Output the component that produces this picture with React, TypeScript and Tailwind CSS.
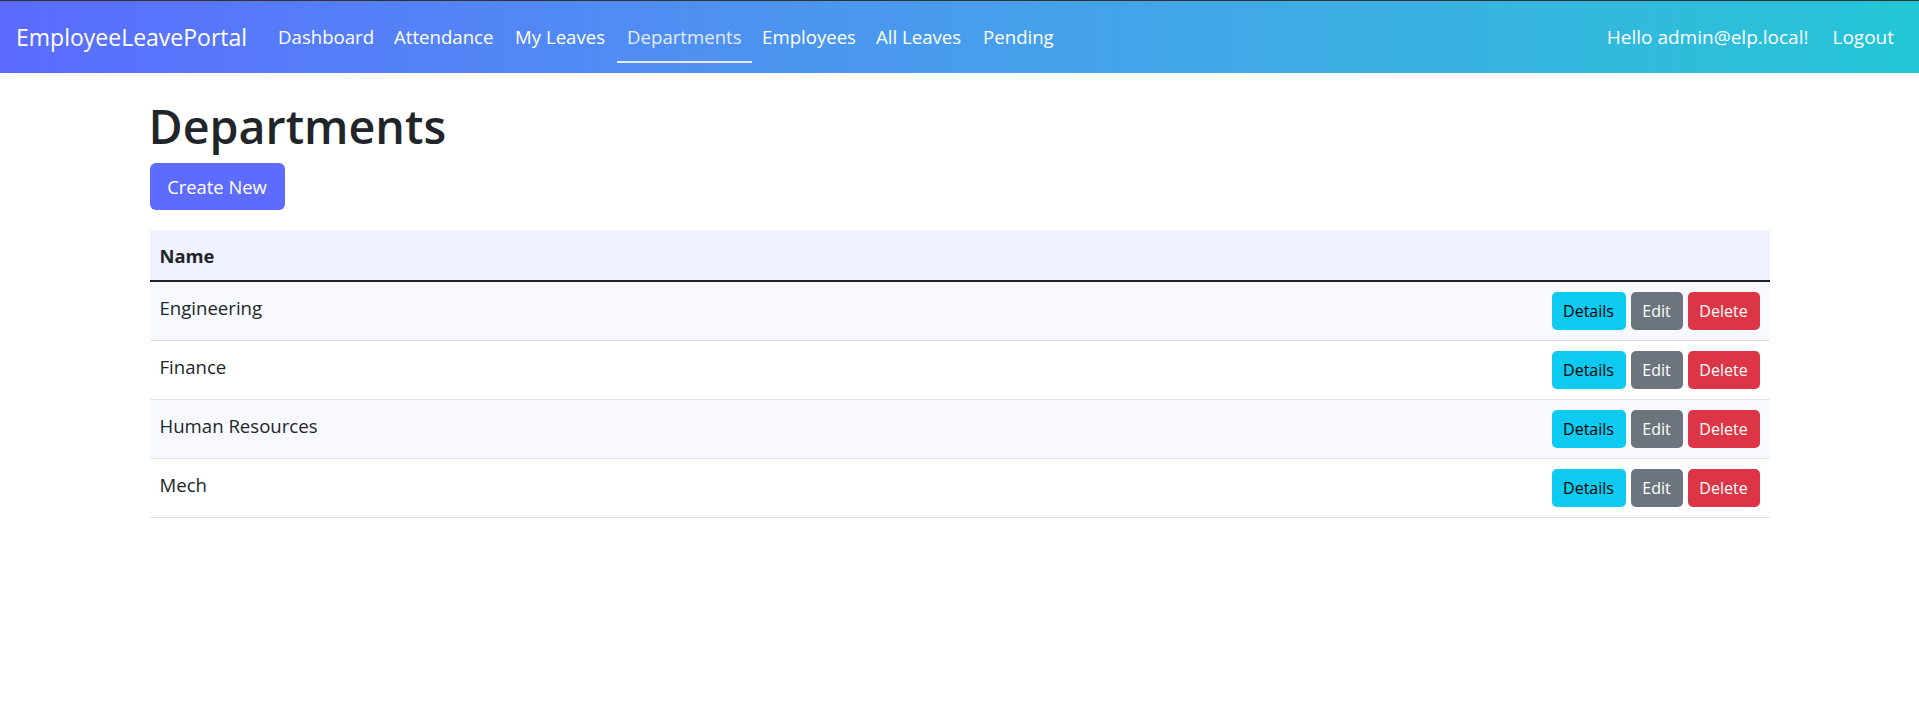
import React from "react";

const navLinks = [
  { label: "Dashboard", w: "w-[116px]" },
  { label: "Attendance", w: "w-[121px]" },
  { label: "My Leaves", w: "w-[112px]" },
  { label: "Departments", w: "w-[135px]", active: true },
  { label: "Employees", w: "w-[114px]" },
  { label: "All Leaves", w: "w-[107px]" },
  { label: "Pending", w: "w-[91px]" },
];

const departments = ["Engineering", "Finance", "Human Resources", "Mech"];

export default function App() {
  return (
    <div
      className="min-h-screen bg-white text-[#212529]"
      style={{ fontFamily: '"Open Sans", "Noto Sans", sans-serif' }}
    >
      <nav className="h-[73px] border-t border-[#333333] bg-linear-to-r from-[#5b6bff] to-[#22c6d6] flex items-stretch pl-[16px] pr-[15px]">
        <a className="flex items-center text-[23px] text-white mr-[21px] whitespace-nowrap">
          EmployeeLeavePortal
        </a>
        <ul className="flex items-stretch">
          {navLinks.map((l) => (
            <li
              key={l.label}
              className={`relative flex items-center px-[10px] text-[18.6px] whitespace-nowrap ${l.w} ${
                l.active ? "text-[#e3eaff]" : "text-white"
              }`}
            >
              {l.label}
              {l.active && (
                <span className="absolute left-0 right-0 top-[60px] h-[2px] bg-[#e6ecfa]" />
              )}
            </li>
          ))}
        </ul>
        <div className="ml-auto flex items-center">
          <span className="text-[19px] text-white whitespace-nowrap mr-[14px]">
            Hello admin@elp.local!
          </span>
          <span className="px-[10px] text-[19px] text-white">Logout</span>
        </div>
      </nav>

      <main className="mx-auto w-[1620px] pt-[23px]">
        <h1 className="text-[46.6px] font-semibold leading-[60px] mb-[7px] -ml-[1px]">
          Departments
        </h1>
        <button className="w-[135px] h-[47px] rounded-[6px] bg-[#5d6bff] text-white text-[18.4px] mb-[20px]">
          Create New
        </button>
        <table className="w-full border-separate border-spacing-0">
          <thead>
            <tr className="bg-[#f0f3ff]">
              <th className="text-left font-bold text-[18.4px] leading-[30px] px-[10px] pt-[11px] pb-[9px] border-b-2 border-[#212529]">
                Name
              </th>
              <th className="border-b-2 border-[#212529]"></th>
            </tr>
          </thead>
          <tbody>
            {departments.map((d, i) => (
              <tr key={d} className={i % 2 === 0 ? "bg-[#f8f9ff]" : "bg-white"}>
                <td className="align-top text-[18.6px] leading-[30px] px-[10px] pt-[11px] pb-[9px] border-b border-[#dee2e6]">
                  {d}
                </td>
                <td className="align-top px-[10px] py-[10px] border-b border-[#dee2e6]">
                  <div className="flex justify-end gap-[5px]">
                    <button className="w-[74px] h-[38px] rounded-[5px] bg-[#0dcaf0] text-black text-[16px]">
                      Details
                    </button>
                    <button className="w-[52px] h-[38px] rounded-[5px] bg-[#6c757d] text-white text-[16px]">
                      Edit
                    </button>
                    <button className="w-[72px] h-[38px] rounded-[5px] bg-[#dc3545] text-white text-[16px]">
                      Delete
                    </button>
                  </div>
                </td>
              </tr>
            ))}
          </tbody>
        </table>
      </main>
    </div>
  );
}
